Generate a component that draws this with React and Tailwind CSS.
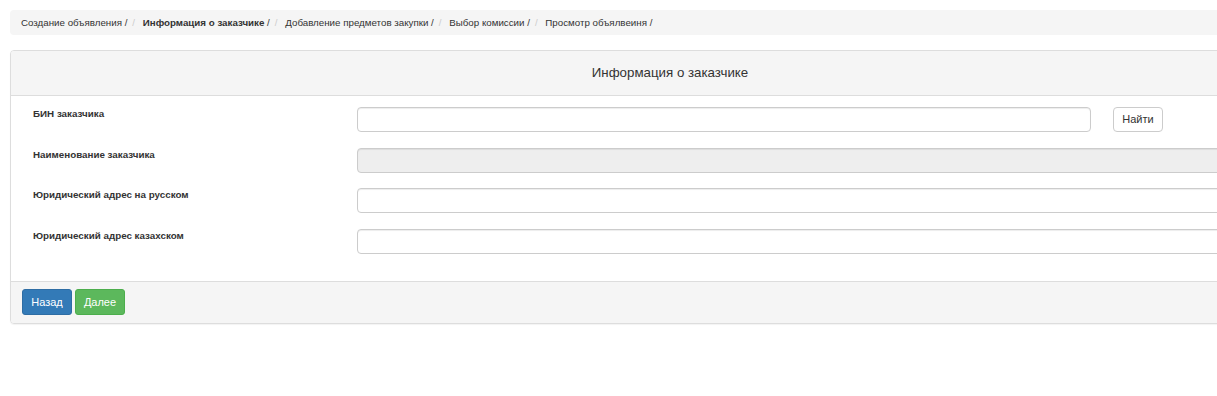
export default function App() {
  const crumbs = [
    { t: "Создание объявления", b: false },
    { t: "Информация о заказчике", b: true },
    { t: "Добавление предметов закупки", b: false },
    { t: "Выбор комиссии", b: false },
    { t: "Просмотр объялвеиня", b: false },
  ];
  const rows = [
    { label: "БИН заказчика", find: true },
    { label: "Наименование заказчика", disabled: true },
    { label: "Юридический адрес на русском" },
    { label: "Юридический адрес казахском" },
  ];
  return (
    <div
      className="w-[1217px] h-[396px] overflow-hidden bg-white text-[#333]"
      style={{ fontFamily: '"Liberation Sans", Arial, sans-serif' }}
    >
      <div className="w-[1360px] pl-[10px] pt-[10px]">
        <div className="w-[1320px] h-[25px] bg-[#f5f5f5] rounded-[4px] pl-[11px] flex items-center text-[9.75px] leading-[14px]">
          {crumbs.map((c, i) => (
            <span key={i} className="flex items-center">
              {i > 0 && <span className="px-[5px] text-[#ccc]">/&nbsp;</span>}
              <span className={c.b ? "font-bold text-[#333]" : "text-[#333]"}>{c.t}</span>
              <span className="text-[#333]">&nbsp;/</span>
            </span>
          ))}
        </div>
        <div className="mt-[15px] w-[1320px] border border-[#ddd] rounded-[4px] shadow-[0_1px_1px_rgba(0,0,0,0.05)]">
          <div className="h-[45px] bg-[#f5f5f5] border-b border-[#ddd] rounded-t-[3px] flex items-center justify-center text-[13.3px]">
            Информация о заказчике
          </div>
          <div className="pt-[11px] pb-[27px] flex flex-col gap-[15.5px]">
            {rows.map((r, i) => (
              <div key={i} className="flex items-start">
                <div className="w-[346px] pl-[22px] text-[9.8px] leading-[14px] font-bold">
                  {r.label}
                </div>
                {r.find ? (
                  <div className="flex items-start">
                    <div className="w-[734px] h-[25px] border border-[#ccc] rounded-[4px] bg-white shadow-[inset_0_1px_1px_rgba(0,0,0,0.075)]" />
                    <button className="ml-[22px] w-[50px] h-[25px] border border-[#ccc] rounded-[4px] bg-white text-[11px] text-[#333]">
                      Найти
                    </button>
                  </div>
                ) : (
                  <div
                    className={
                      "w-[940px] h-[25px] border border-[#ccc] rounded-[4px] shadow-[inset_0_1px_1px_rgba(0,0,0,0.075)] " +
                      (r.disabled ? "bg-[#eee]" : "bg-white")
                    }
                  />
                )}
              </div>
            ))}
          </div>
          <div className="h-[42px] bg-[#f5f5f5] border-t border-[#ddd] rounded-b-[3px] pl-[11px] flex items-center gap-[3px]">
            <button className="w-[50px] h-[26px] rounded-[3px] bg-[#337ab7] border border-[#2e6da4] text-white text-[11px]">
              Назад
            </button>
            <button className="w-[50px] h-[26px] rounded-[3px] bg-[#5cb85c] border border-[#4cae4c] text-white text-[11px]">
              Далее
            </button>
          </div>
        </div>
      </div>
    </div>
  );
}
